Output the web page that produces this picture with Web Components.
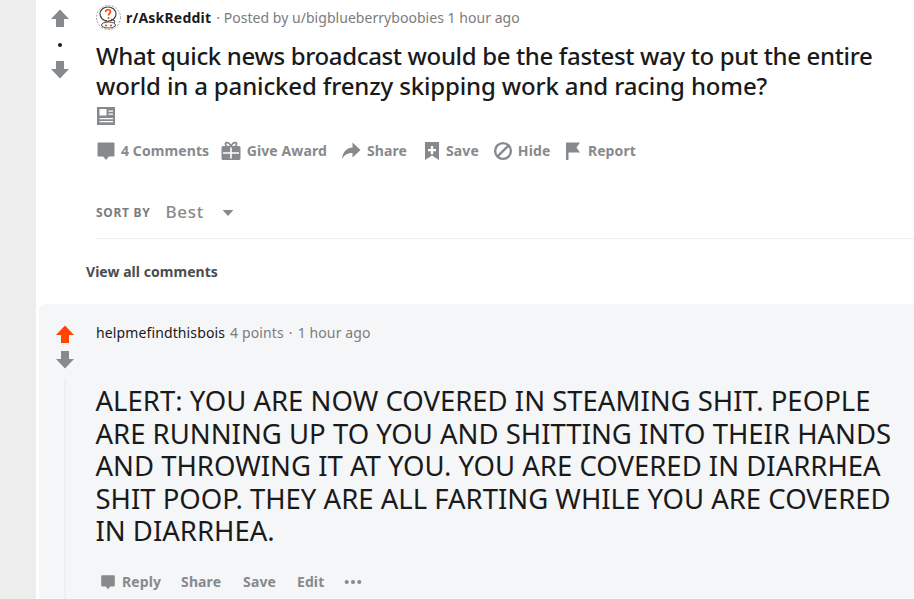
<!DOCTYPE html>
<html>
<head>
<meta charset="utf-8">
<title>r/AskReddit</title>
<style>
  html, body { margin: 0; height: 100%; overflow: hidden; background: #fff; }
  body { font-family: "Noto Sans", "Liberation Sans", sans-serif; }
</style>
</head>
<body>
<rd-page>
  <rd-post
    sub="r/AskReddit"
    meta="Posted by u/bigblueberryboobies 1 hour ago"
    line1="What quick news broadcast would be the fastest way to put the entire"
    line2="world in a panicked frenzy skipping work and racing home?">
    <rd-action slot="actions" icon="comment" gap="5" next="12">4 Comments</rd-action>
    <rd-action slot="actions" icon="gift" gap="5.5" next="14">Give Award</rd-action>
    <rd-action slot="actions" icon="share" gap="6" next="15">Share</rd-action>
    <rd-action slot="actions" icon="save" gap="4" next="14.5">Save</rd-action>
    <rd-action slot="actions" icon="hide" gap="4.5" next="13">Hide</rd-action>
    <rd-action slot="actions" icon="report" gap="4.5" next="0">Report</rd-action>
  </rd-post>
  <rd-comment author="helpmefindthisbois" points="4 points" age="1 hour ago">
    ALERT: YOU ARE NOW COVERED IN STEAMING SHIT. PEOPLE ARE RUNNING UP TO YOU AND SHITTING INTO THEIR HANDS AND THROWING IT AT YOU. YOU ARE COVERED IN DIARRHEA SHIT POOP. THEY ARE ALL FARTING WHILE YOU ARE COVERED IN DIARRHEA.
    <rd-action slot="actions" icon="comment" size="16" gap="6" next="20">Reply</rd-action>
    <rd-action slot="actions" next="22">Share</rd-action>
    <rd-action slot="actions" next="21">Save</rd-action>
    <rd-action slot="actions" next="20">Edit</rd-action>
    <rd-action slot="actions" icon="more" size="18" next="0"></rd-action>
  </rd-comment>
</rd-page>

<script>
// svg bodies, 20x20 viewbox
const ICONS = {
  up: '<path d="M10 1.5 19 11h-5v8H6v-8H1z"/>',
  down: '<path d="M6 1h8v8h5l-9 9.5L1 9h5z"/>',
  comment: '<path d="M2.5 1.5h15a1 1 0 0 1 1 1v12a1 1 0 0 1-1 1h-4.6L10 19l-2.9-3.5H2.5a1 1 0 0 1-1-1v-12a1 1 0 0 1 1-1z"/>',
  gift: '<path fill-rule="evenodd" d="M5 .8c1.8-.6 3.9.5 5 2.7 1.1-2.2 3.2-3.3 5-2.7 1.8.7 1.8 3 .5 4.2H18A1.500 1.500 0 0 1 19.500 6.500v11A1.500 1.500 0 0 1 18 19H2A1.500 1.500 0 0 1 .5 17.500v-11A1.500 1.500 0 0 1 2 5h2.500C3.200 3.800 3.200 1.500 5 .8zM6 2.500c-1.200.1-.8 2 1 2.500h1.800C8.300 3.500 7.100 2.400 6 2.500zm8 0c-1.100-.1-2.300 1-2.800 2.500H13c1.800-.5 2.200-2.400 1-2.500zM9.200 6.500v4.800H2v1.400h7.200v4.800h1.600v-4.800H18v-1.400h-7.200V6.500z"/>',
  share: '<path d="M11.500 1.500 19.500 9l-8 7.500V12C7 12 3.500 13.500 1 18c.5-6.500 4-11 10.500-11.500z"/>',
  save: '<path fill-rule="evenodd" d="M3 1h14v18l-7-4.500L3 19zM8.800 5v3H6v2.200h2.800v3h2.400v-3H14V8h-2.800V5z"/>',
  hide: '<circle cx="10" cy="10" r="7.900" fill="none" stroke="currentColor" stroke-width="2.400"/><path d="M4.800 15.200 15.200 4.800" fill="none" stroke="currentColor" stroke-width="2.400"/>',
  report: '<path d="M3 1.500h14l-3.500 5 3.500 5H5.500v7.500H3z"/>',
  more: '<circle cx="3" cy="10" r="2.300"/><circle cx="10" cy="10" r="2.300"/><circle cx="17" cy="10" r="2.300"/>',
  caret: '<path d="M1 5h18l-9 10z"/>',
  news: '<path fill-rule="evenodd" d="M1 1h18v18H1zM3.500 3v6.500h7V3zM12.500 4.500v1.200h4.500V4.500zM12.500 7.500v1.200h4.500V7.500zM3.500 12v1.200h13.500V12zM3.500 15v1.200h13.500V15z"/>'
};

class RdIcon extends HTMLElement {
  connectedCallback() {
    if (this.shadowRoot) return;
    const size = this.getAttribute("size") || 20;
    const shadow = this.attachShadow({ mode: "open" });
    shadow.innerHTML = `
      <style>
        :host { display: inline-flex; flex: none; color: var(--icon-color, #878a8c); }
        svg { display: block; fill: currentColor; }
      </style>
      <svg width="${size}" height="${size}" viewBox="0 0 20 20">${ICONS[this.getAttribute("name")] || ""}</svg>`;
  }
}
customElements.define("rd-icon", RdIcon);

class RdPage extends HTMLElement {
  constructor() {
    super();
    this.attachShadow({ mode: "open" }).innerHTML = `
      <style>
        :host { display: flex; height: 599px; background: #fff; overflow: hidden; }
        .gutter { width: 36px; flex: none; background: #ededed; }
        main { flex: 1; min-width: 0; }
      </style>
      <div class="gutter"></div>
      <main><slot></slot></main>`;
  }
}
customElements.define("rd-page", RdPage);

class RdAction extends HTMLElement {
  connectedCallback() {
    if (this.shadowRoot) return;
    const icon = this.getAttribute("icon");
    const gap = this.getAttribute("gap") || 0;
    const next = this.getAttribute("next") || 0;
    const size = this.getAttribute("size") || 20;
    this.attachShadow({ mode: "open" }).innerHTML = `
      <style>
        :host {
          display: inline-flex; align-items: center; flex: none;
          gap: ${gap}px; margin-right: ${next}px;
          font: 700 14px/20px "Noto Sans", "Open Sans", sans-serif;
          letter-spacing: .1px;
          color: #878a8c; white-space: nowrap;
        }
      </style>
      ${icon ? `<rd-icon name="${icon}" size="${size}"></rd-icon>` : ""}
      <slot></slot>`;
  }
}
customElements.define("rd-action", RdAction);

class RdPost extends HTMLElement {
  connectedCallback() {
    if (this.shadowRoot) return;
    const a = n => this.getAttribute(n);
    this.attachShadow({ mode: "open" }).innerHTML = `
      <style>
        :host { display: block; font-family: "Noto Sans", "Open Sans", sans-serif; }
        .post { display: flex; }
        .vote {
          width: 48px; flex: none; box-sizing: border-box; padding-top: 8px;
          display: flex; flex-direction: column; align-items: center;
        }
        .dot { width: 4px; height: 4px; border-radius: 50%; background: #1a1a1b; margin: 15px 0 13px; }
        .body { flex: 1; min-width: 0; margin-left: 12px; }
        .head { display: flex; align-items: center; height: 24px; padding-top: 5px; font-size: 14px; color: #7c7c7c; white-space: nowrap; }
        .avatar { margin-right: 5px; flex: none; display: block; }
        .sub { font-weight: 700; color: #1a1a1b; letter-spacing: .2px; }
        .meta { margin-left: 5px; letter-spacing: .04px; }
        h1 { margin: 12px 0 0; font-size: 24px; line-height: 30px; font-weight: 500; color: #1a1a1b; letter-spacing: -.35px; }
        /* plex is not installed, so each line gets its own tracking to keep the width */
        h1 span { display: block; white-space: nowrap; }
        h1 span + span { letter-spacing: -.15px; }
        .news { display: block; margin-top: 5px; height: 20px; }
        .actions { display: flex; align-items: center; height: 20px; margin-top: 15px; }
        .sort { display: flex; align-items: center; height: 40px; margin-top: 38px; border-bottom: 1px solid #edeff1; box-sizing: border-box; padding-bottom: 12px; }
        .sort .lbl { font-size: 12px; font-weight: 700; color: #7c7c7c; letter-spacing: .7px; }
        .sort .val { font-size: 17px; font-weight: 500; color: #878a8c; margin: 0 0 2px 15px; letter-spacing: .7px; }
        .sort rd-icon { margin-left: 18px; }
        .all { margin: 23px 0 0 -10px; height: 20px; font-size: 14px; line-height: 20px; font-weight: 700; color: #4a4d50; letter-spacing: .04px; }
      </style>
      <div class="post">
        <div class="vote">
          <rd-icon name="up"></rd-icon>
          <div class="dot"></div>
          <rd-icon name="down"></rd-icon>
        </div>
        <div class="body">
          <div class="head">
            <svg class="avatar" width="25" height="25" viewBox="0 0 25 25">
              <circle cx="12.500" cy="12.500" r="12" fill="#fff" stroke="#9a9a9a" stroke-dasharray="2 1.500"/>
              <ellipse cx="12" cy="9" rx="8" ry="7" fill="#fff" stroke="#444" stroke-width="1.200"/>
              <path d="M11 15l-2 3 4-2" fill="#fff" stroke="#444" stroke-width="1"/>
              <path d="M9.500 7c0-3 5-3 5 0 0 1.500-2 1.500-2 3.500" fill="none" stroke="#ff4500" stroke-width="1.600"/>
              <circle cx="12.500" cy="13" r="1" fill="#ff4500"/>
              <ellipse cx="12.500" cy="20" rx="7" ry="3" fill="#fff" stroke="#555"/>
              <circle cx="10" cy="20.500" r="1.100" fill="#ff4500"/>
              <circle cx="15" cy="20.500" r="1.100" fill="#ff4500"/>
              <path d="M15 14l4 2-1 2" fill="none" stroke="#444"/>
            </svg>
            <span class="sub">${a("sub")}</span>
            <span class="meta">· ${a("meta")}</span>
          </div>
          <h1><span>${a("line1")}</span> <span>${a("line2")}</span></h1>
          <rd-icon class="news" name="news"></rd-icon>
          <div class="actions"><slot name="actions"></slot></div>
          <div class="sort">
            <span class="lbl">SORT BY</span>
            <span class="val">Best</span>
            <rd-icon name="caret" size="12"></rd-icon>
          </div>
          <div class="all">View all comments</div>
        </div>
      </div>`;
  }
}
customElements.define("rd-post", RdPost);

class RdComment extends HTMLElement {
  connectedCallback() {
    if (this.shadowRoot) return;
    const a = n => this.getAttribute(n);
    this.attachShadow({ mode: "open" }).innerHTML = `
      <style>
        :host {
          display: flex; margin: 22px 0 0 3px; height: 295px; box-sizing: border-box;
          background: #f5f6f8; border-radius: 6px 0 0 0;
          font-family: "Noto Sans", "Open Sans", sans-serif;
        }
        .side { width: 52px; flex: none; box-sizing: border-box; padding-top: 20px; display: flex; flex-direction: column; align-items: center; }
        .side .arrow { height: 26px; }
        .line { width: 2px; flex: 1; background: #edeff1; margin-top: 2px; }
        .body { flex: 1; min-width: 0; margin-left: 5px; }
        .head { display: flex; height: 20px; margin-top: 19px; font-size: 14px; line-height: 20px; color: #7c7c7c; white-space: nowrap; letter-spacing: .12px; }
        .author { color: #1a1a1b; }
        .points { margin-left: 5px; }
        .sep { margin: 0 5px; }
        .text { margin: 42px 0 0 -.5px; font-size: 27.5px; line-height: 32.5px; color: #1a1a1b; }
        .actions { display: flex; align-items: center; height: 20px; margin-top: 24px; margin-left: 4px; }
      </style>
      <div class="side">
        <rd-icon class="arrow" name="up" style="--icon-color:#ff4500"></rd-icon>
        <rd-icon class="arrow" name="down"></rd-icon>
        <div class="line"></div>
      </div>
      <div class="body">
        <div class="head"><span class="author">${a("author")}</span><span class="points">${a("points")}</span><span class="sep">·</span><span>${a("age")}</span></div>
        <div class="text"><slot></slot></div>
        <div class="actions"><slot name="actions"></slot></div>
      </div>`;
  }
}
customElements.define("rd-comment", RdComment);
</script>
</body>
</html>
